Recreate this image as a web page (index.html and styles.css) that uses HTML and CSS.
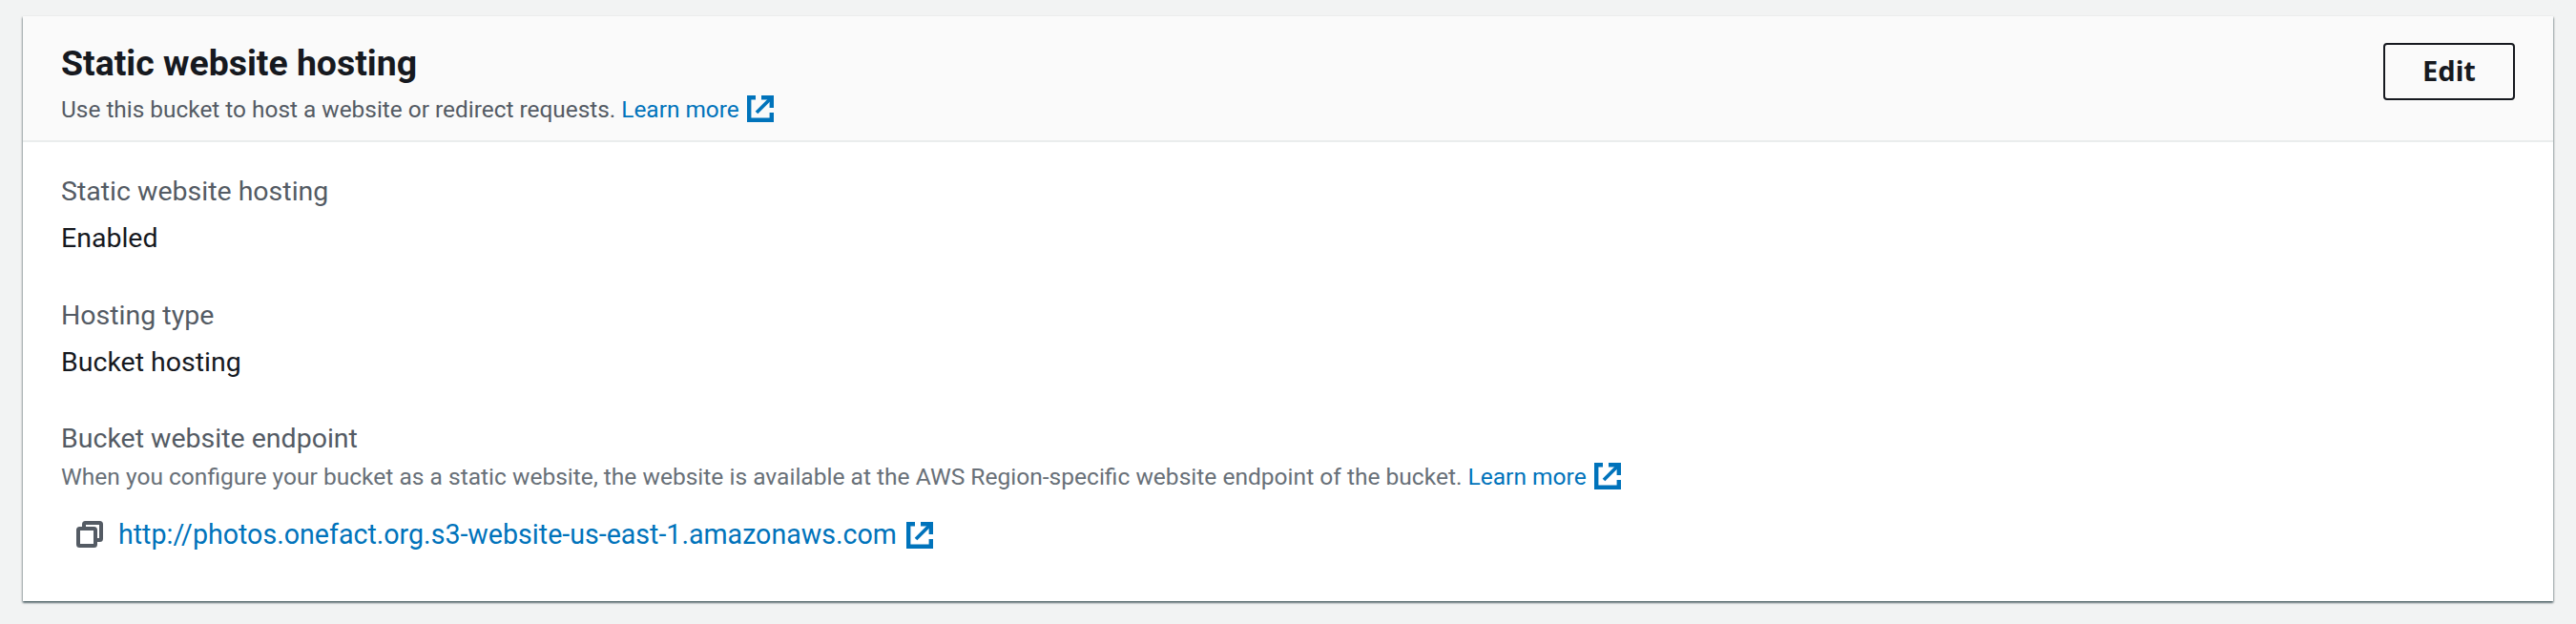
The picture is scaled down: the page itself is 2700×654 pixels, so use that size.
FILE: index.html
```html
<!DOCTYPE html>
<html lang="en">
<head>
    <meta charset="UTF-8">
    <meta name="viewport" content="width=device-width, initial-scale=1.0">
    <title>Static website hosting</title>
    <link rel="stylesheet" href="styles.css">
</head>
<body>
    <div class="card">
        <div class="card-head">
            <div>
                <h2 class="title">Static website hosting</h2>
                <p class="sub">Use this bucket to host a website or redirect requests. <a class="link" href="#">Learn more<svg class="ext" viewBox="0 0 28 28"><path d="M9 2.200H2.200v23.600h23.600V18" fill="none" stroke="currentColor" stroke-width="4.400"/><path d="M15 2.200h10.800V13" fill="none" stroke="currentColor" stroke-width="4.400"/><path d="M25 3L10 18" fill="none" stroke="currentColor" stroke-width="3.800"/></svg></a></p>
            </div>
            <button class="btn">Edit</button>
        </div>
        <div class="card-body">
            <div class="item">
                <div class="label">Static website hosting</div>
                <div class="value">Enabled</div>
            </div>
            <div class="item">
                <div class="label">Hosting type</div>
                <div class="value">Bucket hosting</div>
            </div>
            <div class="item">
                <div class="label">Bucket website endpoint</div>
                <p class="desc">When you configure your bucket as a static website, the website is available at the AWS Region-specific website endpoint of the bucket. <a class="link" href="#">Learn more<svg class="ext" viewBox="0 0 28 28"><path d="M9 2.200H2.200v23.600h23.600V18" fill="none" stroke="currentColor" stroke-width="4.400"/><path d="M15 2.200h10.800V13" fill="none" stroke="currentColor" stroke-width="4.400"/><path d="M25 3L10 18" fill="none" stroke="currentColor" stroke-width="3.800"/></svg></a></p>
                <div class="endpoint">
                    <svg class="copy" viewBox="0 0 28 28"><path d="M8 6V3.500A1.500 1.500 0 0 1 9.500 2h15A1.500 1.500 0 0 1 26 3.500v15a1.500 1.500 0 0 1-1.500 1.500H22" fill="none" stroke="#545b64" stroke-width="4"/><rect x="2" y="8" width="18" height="18" rx="1.500" fill="none" stroke="#545b64" stroke-width="4"/></svg>
                    <a class="link url" href="#">http://photos.onefact.org.s3-website-us-east-1.amazonaws.com<svg class="ext" viewBox="0 0 28 28"><path d="M9 2.200H2.200v23.600h23.600V18" fill="none" stroke="currentColor" stroke-width="4.400"/><path d="M15 2.200h10.800V13" fill="none" stroke="currentColor" stroke-width="4.400"/><path d="M25 3L10 18" fill="none" stroke="currentColor" stroke-width="3.800"/></svg></a>
                </div>
            </div>
        </div>
    </div>
</body>
</html>
```

FILE: styles.css
```css
body{
    margin: 0;
    height: 654px;
    padding: 17px 24px 0;
    box-sizing: border-box;
    background: #f2f3f3;
    font-family: "Roboto", "Noto Sans", sans-serif;
    color: #16191f;
    overflow: hidden;
}
.card{
    height: 613px;
    background: #fff;
    box-shadow: 0 2px 2px rgba(0,28,36,.5), 1px 1px 2px rgba(0,28,36,.2), -1px 1px 2px rgba(0,28,36,.2);
}
.card-head{
    height: 130px;
    background: #fafafa;
    border-bottom: 2px solid #eaeded;
    display: flex;
    justify-content: space-between;
    padding: 0 40px;
}
.title{
    margin: 25px 0 0;
    font-size: 37.400px;
    line-height: 48px;
    font-weight: 700;
}
.sub{
    margin: 5px 0 0;
    font-size: 24.400px;
    line-height: 40px;
    color: #545b64;
}
.btn{
    margin-top: 28px;
    padding: 0 0 3px;
    width: 138px;
    height: 60px;
    border: 2px solid #16191f;
    border-radius: 4px;
    background: #fafafa;
    color: #16191f;
    font-family: "Noto Sans", sans-serif;
    font-size: 29px;
    font-weight: 700;
}
.card-body{
    padding: 32px 40px 0;
}
.item{
    margin-bottom: 40.500px;
}
.label{
    font-size: 28.500px;
    line-height: 40px;
    color: #545b64;
}
.value{
    margin-top: 9px;
    font-size: 28.500px;
    line-height: 40px;
}
.desc{
    margin: 2px 0 0;
    font-size: 24.550px;
    line-height: 36px;
    color: #687078;
}
.link{
    color: #0073bb;
    text-decoration: none;
}
.ext{
    width: 28px;
    height: 28px;
    margin-left: 8px;
    vertical-align: -5px;
}
.endpoint{
    display: flex;
    align-items: center;
    margin-top: 22px;
    padding-left: 16px;
}
.copy{
    width: 28px;
    height: 28px;
    margin-right: 16px;
}
.url{
    font-size: 28.600px;
    line-height: 40px;
}
.url .ext{
    margin-left: 10px;
}
```
